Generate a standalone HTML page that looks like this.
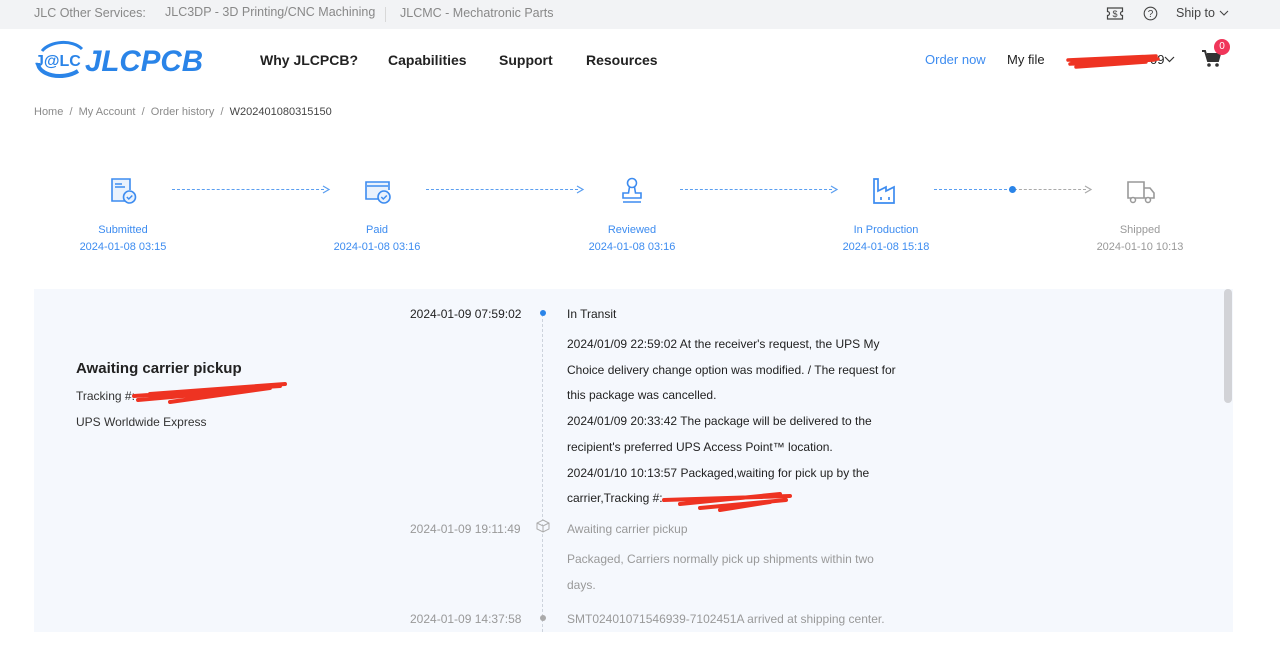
<!DOCTYPE html>
<html><head><meta charset="utf-8">
<style>
*{margin:0;padding:0;box-sizing:border-box}
body{width:1280px;height:647px;overflow:hidden;background:#fff;font-family:"Liberation Sans",Arial,sans-serif;position:relative;color:#222}
.a{position:absolute;white-space:nowrap}
.top{position:absolute;left:0;top:0;width:1280px;height:29px;background:#f2f3f5;font-size:12.5px;color:#888}
.nav{font-size:14px;font-weight:bold;color:#222}
.bc{font-size:11px;color:#8a8a8a}
.sl{font-size:11px;color:#3d8cf0;text-align:center;width:160px}
.dash{position:absolute;top:189px;height:0;border-top:1.3px dashed #5a9ef0}
.panel{position:absolute;left:34px;top:289px;width:1199px;height:343px;background:#f5f8fd}
.t{font-size:12px;color:#222}
.g{color:#999}
</style></head><body>
<div class="top">
 <span class="a" style="left:34px;top:6px">JLC Other Services:</span>
 <span class="a" style="left:165px;top:5px">JLC3DP - 3D Printing/CNC Machining</span>
 <span class="a" style="left:385px;top:7px;width:1px;height:15px;background:#d8d8d8"></span>
 <span class="a" style="left:400px;top:6px">JLCMC - Mechatronic Parts</span>
 <svg class="a" style="left:1106px;top:6px" width="18" height="15" viewBox="0 0 18 15"><path d="M1.5 2h15v3.5a2 2 0 0 0 0 4V13h-15V9.5a2 2 0 0 0 0-4z" fill="none" stroke="#444" stroke-width="1.2"/><text x="9" y="11" font-size="9" text-anchor="middle" fill="#444" font-family="Liberation Sans">$</text></svg>
 <svg class="a" style="left:1143px;top:6px" width="15" height="15"><circle cx="7.5" cy="7.5" r="6.3" fill="none" stroke="#444" stroke-width="1.1"/><text x="7.5" y="11.2" font-size="10" text-anchor="middle" fill="#444" font-family="Liberation Sans">?</text></svg>
 <span class="a" style="left:1176px;top:6px;color:#444">Ship to</span>
 <svg class="a" style="left:1219px;top:10px" width="10" height="7"><path d="M1 1l4 4 4-4" fill="none" stroke="#444" stroke-width="1.1"/></svg>
</div>
<!-- logo -->
<svg class="a" style="left:32px;top:39px" width="178" height="42" viewBox="0 0 178 42">
 <path d="M6 24c0 12 24 18 40 8" fill="none" stroke="#2a84e8" stroke-width="4"/>
 <path d="M10 12c8-10 30-12 40-2" fill="none" stroke="#2a84e8" stroke-width="3"/>
 <text x="3" y="27" font-size="16" font-weight="bold" fill="#2a84e8" font-family="Liberation Sans">J@LC</text>
 <text x="53" y="32" font-size="30" font-weight="bold" font-style="italic" fill="#2a84e8" font-family="Liberation Sans" textLength="118" lengthAdjust="spacingAndGlyphs">JLCPCB</text>
</svg>
<span class="a nav" style="left:260px;top:52px">Why JLCPCB?</span>
<span class="a nav" style="left:388px;top:52px">Capabilities</span>
<span class="a nav" style="left:499px;top:52px">Support</span>
<span class="a nav" style="left:586px;top:52px">Resources</span>
<span class="a" style="left:925px;top:52px;font-size:13px;color:#3d8cf0">Order now</span>
<span class="a" style="left:1007px;top:52px;font-size:13px;color:#222">My file</span>
<span class="a" style="left:1150px;top:52px;font-size:13px;color:#222">09</span>
<svg class="a" style="left:1066px;top:50px" width="95" height="22"><path d="M2 10 L90 6 M4 14 L88 10 M10 17 L80 12 M6 12 L92 9" stroke="#ee3322" stroke-width="3.5" fill="none" stroke-linecap="round"/></svg>
<svg class="a" style="left:1164px;top:56px" width="11" height="7"><path d="M1 1l4.5 4.5L10 1" fill="none" stroke="#333" stroke-width="1.2"/></svg>
<svg class="a" style="left:1201px;top:48px" width="22" height="20"><path d="M1 3h3l3 10h10l2-7H6" fill="none" stroke="#333" stroke-width="2"/><path d="M6 6h13l-2 7H7z" fill="#333"/><circle cx="8" cy="17" r="1.8" fill="#333"/><circle cx="16" cy="17" r="1.8" fill="#333"/></svg>
<span class="a" style="left:1214px;top:39px;width:16px;height:16px;border-radius:8px;background:#f0365a;color:#fff;font-size:10px;text-align:center;line-height:16px">0</span>
<span class="a bc" style="left:34px;top:106px">Home &nbsp;/&nbsp; My Account &nbsp;/&nbsp; Order history &nbsp;/&nbsp; <span style="color:#444">W202401080315150</span></span>
<!-- steps -->
<svg class="a" style="left:110px;top:177px" width="28" height="28" viewBox="0 0 28 28"><path d="M16 24H2V2h18v11" fill="#eaf2fd" stroke="#3d8cf0" stroke-width="1.6"/><path d="M5 7h7M5 10h10" stroke="#3d8cf0" stroke-width="1.4"/><circle cx="19.5" cy="20" r="6" fill="#eaf2fd" stroke="#3d8cf0" stroke-width="1.6"/><path d="M16.8 20l2 2 3.5-3.5" fill="none" stroke="#3d8cf0" stroke-width="1.5"/></svg>
<svg class="a" style="left:364px;top:179px" width="28" height="26" viewBox="0 0 28 26"><path d="M15 20H2V3h23v8" fill="#eaf2fd" stroke="#3d8cf0" stroke-width="1.6"/><path d="M3 7h21" stroke="#3d8cf0" stroke-width="1.4"/><circle cx="20" cy="18" r="6" fill="#eaf2fd" stroke="#3d8cf0" stroke-width="1.6"/><path d="M17.3 18l2 2 3.5-3.5" fill="none" stroke="#3d8cf0" stroke-width="1.5"/></svg>
<svg class="a" style="left:620px;top:177px" width="24" height="28" viewBox="0 0 24 28"><circle cx="12" cy="6" r="4.5" fill="none" stroke="#3d8cf0" stroke-width="1.6"/><path d="M9.5 10l-1 6H3v5h18v-5h-5.5l-1-6M3 25h18" fill="none" stroke="#3d8cf0" stroke-width="1.6"/></svg>
<svg class="a" style="left:872px;top:177px" width="28" height="28" viewBox="0 0 28 28"><path d="M2 26V2h4v12l8-4v4l8-4v16z" fill="none" stroke="#3d8cf0" stroke-width="1.7"/><path d="M9 20v3M17 20v3" stroke="#3d8cf0" stroke-width="1.7"/></svg>
<svg class="a" style="left:1126px;top:179px" width="30" height="26" viewBox="0 0 30 26"><path d="M2 3h16v16H2zM18 9h6l4 5v5H18" fill="none" stroke="#999" stroke-width="1.6"/><circle cx="7" cy="21" r="2.5" fill="#fff" stroke="#999" stroke-width="1.5"/><circle cx="22" cy="21" r="2.5" fill="#fff" stroke="#999" stroke-width="1.5"/></svg>
<div class="dash" style="left:172px;width:152px"></div><svg class="a" style="left:322px;top:185px" width="9" height="9"><path d="M1 1l6 3.5L1 8" fill="none" stroke="#5a9ef0" stroke-width="1.2"/></svg>
<div class="dash" style="left:426px;width:152px"></div><svg class="a" style="left:576px;top:185px" width="9" height="9"><path d="M1 1l6 3.5L1 8" fill="none" stroke="#5a9ef0" stroke-width="1.2"/></svg>
<div class="dash" style="left:680px;width:152px"></div><svg class="a" style="left:830px;top:185px" width="9" height="9"><path d="M1 1l6 3.5L1 8" fill="none" stroke="#5a9ef0" stroke-width="1.2"/></svg>
<div class="dash" style="left:934px;width:78px"></div>
<div class="dash" style="left:1014px;width:72px;border-color:#aaa"></div><svg class="a" style="left:1084px;top:185px" width="9" height="9"><path d="M1 1l6 3.5L1 8" fill="none" stroke="#aaa" stroke-width="1.2"/></svg>
<span class="a" style="left:1009px;top:186px;width:7px;height:7px;border-radius:4px;background:#2a84e8"></span>
<span class="a sl" style="left:43px;top:219px;top:224px">Submitted</span><span class="a sl" style="left:43px;top:246px;top:241px">2024-01-08 03:15</span>
<span class="a sl" style="left:297px;top:224px">Paid</span><span class="a sl" style="left:297px;top:241px">2024-01-08 03:16</span>
<span class="a sl" style="left:552px;top:224px">Reviewed</span><span class="a sl" style="left:552px;top:241px">2024-01-08 03:16</span>
<span class="a sl" style="left:806px;top:224px">In Production</span><span class="a sl" style="left:806px;top:241px">2024-01-08 15:18</span>
<span class="a sl" style="left:1060px;top:224px;color:#999">Shipped</span><span class="a sl" style="left:1060px;top:241px;color:#999">2024-01-10 10:13</span>
<!-- panel -->
<div class="panel"></div>
<span class="a" style="left:1224px;top:289px;width:8px;height:114px;border-radius:4px;background:#d2d3d7"></span>
<span class="a" style="left:76px;top:360px;font-size:15px;font-weight:bold;color:#222">Awaiting carrier pickup</span>
<span class="a" style="left:76px;top:389px;font-size:12px;color:#333">Tracking #:</span>
<svg class="a" style="left:130px;top:380px" width="160" height="26"><path d="M4 16L150 6M8 20L120 10M40 22L140 8M20 14L155 4" stroke="#ee3322" stroke-width="4" fill="none" stroke-linecap="round"/></svg>
<span class="a" style="left:76px;top:415px;font-size:12px;color:#333">UPS Worldwide Express</span>
<div class="a" style="left:542px;top:314px;height:318px;border-left:1px dashed #cdd3dc"></div>
<span class="a t" style="left:410px;top:307px">2024-01-09 07:59:02</span>
<span class="a" style="left:540px;top:310px;width:6px;height:6px;border-radius:3px;background:#2a84e8"></span>
<span class="a t" style="left:567px;top:307px">In Transit</span>
<div class="a t" style="left:567px;top:332px;line-height:25.7px;white-space:normal;width:345px">2024/01/09 22:59:02 At the receiver's request, the UPS My Choice delivery change option was modified. / The request for this package was cancelled.<br>2024/01/09 20:33:42 The package will be delivered to the recipient's preferred UPS Access Point™ location.<br>2024/01/10 10:13:57 Packaged,waiting for pick up by the carrier,Tracking #: </div>
<svg class="a" style="left:660px;top:488px" width="135" height="26"><path d="M4 12L130 8M20 16L120 6M40 20L126 12M60 22L110 14" stroke="#ee3322" stroke-width="4" fill="none" stroke-linecap="round"/></svg>
<span class="a t g" style="left:410px;top:522px">2024-01-09 19:11:49</span>
<svg class="a" style="left:536px;top:519px" width="14" height="14"><path d="M7 1l6 3v6l-6 3-6-3V4zM1 4l6 3 6-3M7 7v6" fill="#f5f8fd" stroke="#aaa" stroke-width="1"/></svg>
<span class="a t g" style="left:567px;top:522px">Awaiting carrier pickup</span>
<div class="a t g" style="left:567px;top:547px;line-height:25.5px;white-space:normal;width:330px">Packaged, Carriers normally pick up shipments within two days.</div>
<span class="a t g" style="left:410px;top:612px">2024-01-09 14:37:58</span>
<span class="a" style="left:540px;top:615px;width:6px;height:6px;border-radius:3px;background:#aaa"></span>
<span class="a t g" style="left:567px;top:612px">SMT02401071546939-7102451A arrived at shipping center.</span>
</body></html>
